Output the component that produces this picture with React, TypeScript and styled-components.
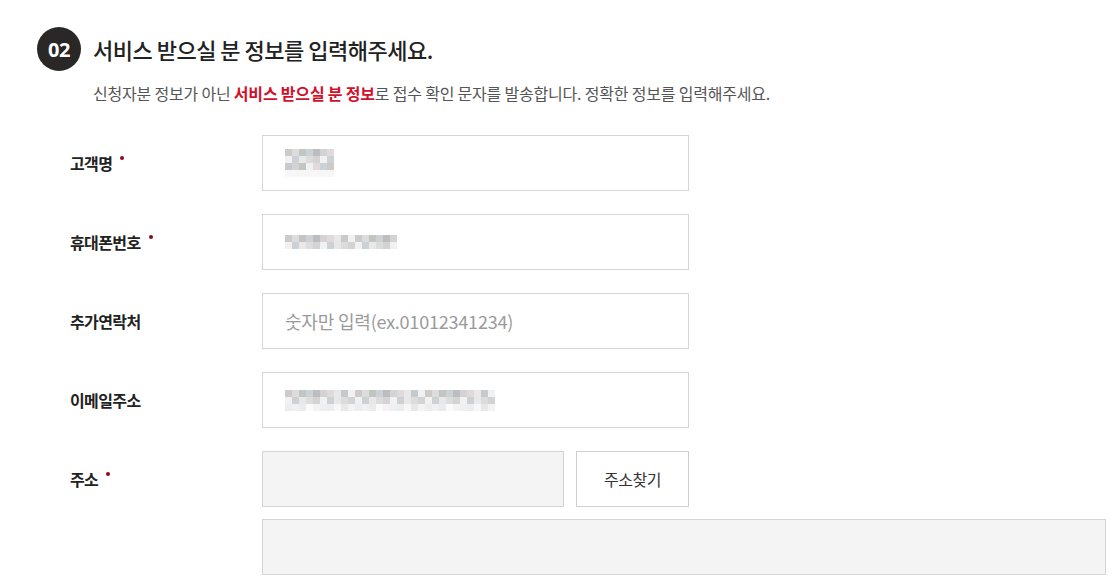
import React from "react";
import styled, { createGlobalStyle } from "styled-components";

const GlobalStyle = createGlobalStyle`
    body {
        margin: 0;
        background: #fff;
        font-family: "Noto Sans CJK KR", "Noto Sans", sans-serif;
        color: #222;
    }
`;

const Wrapper = styled.div`
    padding: 27px 0 0 37px;
`;

const Header = styled.header`
    display: flex;
    align-items: center;
    gap: 12px;
`;

const Badge = styled.span`
    width: 44px;
    height: 44px;
    border-radius: 50%;
    background: #2a2727;
    color: #fff;
    display: flex;
    align-items: center;
    justify-content: center;
    font-family: "Noto Sans", sans-serif;
    font-size: 20px;
    font-weight: 700;
    letter-spacing: -0.5px;
`;

const Title = styled.h2`
    margin: 0;
    font-size: 22px;
    font-weight: 500;
    letter-spacing: -0.5px;
    color: #222;
`;

const Desc = styled.p`
    margin: 11px 0 0 56px;
    font-size: 16px;
    color: #555;
    letter-spacing: -0.2px;
    line-height: 22px;

    strong {
        color: #d0112b;
        font-weight: 700;
    }
`;

const Form = styled.div`
    margin: 31px 0 0 33px;
    display: flex;
    flex-direction: column;
    gap: 23px;
`;

const Row = styled.div`
    display: grid;
    grid-template-columns: 192px auto;
    align-items: start;
`;

const Label = styled.label`
    height: 56px;
    display: flex;
    align-items: center;
    font-size: 16px;
    font-weight: 700;
    color: #222;
    letter-spacing: -0.6px;
`;

const Required = styled.i`
    width: 4px;
    height: 4px;
    border-radius: 50%;
    background: #8b0a1a;
    margin: -10px 0 0 8px;
`;

const Field = styled.div<{ $width?: number; $filled?: boolean }>`
    width: ${(p) => p.$width ?? 427}px;
    height: 56px;
    box-sizing: border-box;
    border: 1px solid #d5d5d5;
    background: ${(p) => (p.$filled ? "#f4f4f4" : "#fff")};
    display: flex;
    align-items: center;
    padding-left: 22px;
    font-size: 18px;
`;

const Placeholder = styled.span`
    color: #9a9a9a;
    letter-spacing: -0.2px;
`;

const AddressBlock = styled.div`
    display: flex;
    flex-direction: column;
    gap: 12px;
`;

const AddressLine = styled.div`
    display: flex;
    gap: 12px;
`;

const SearchButton = styled.button`
    width: 113px;
    height: 56px;
    box-sizing: border-box;
    border: 1px solid #cfcfcf;
    background: #fff;
    font-family: inherit;
    font-size: 16px;
    color: #333;
    letter-spacing: -0.5px;
`;

const palette = ["#d3d3d5", "#c6cacd", "#dcdcdc", "#bdbcbe", "#e8e8e8", "#cfcaca", "#cbd1d5", "#e0dada", "#f1f1f1", "#c2c5c2"];

function Mosaic({ cols, rows, seed }: { cols: number; rows: number; seed: number }) {
    const cell = 7;
    const rects = [];
    for (let r = 0; r < rows; r++) {
        for (let c = 0; c < cols; c++) {
            const v = (c * 7 + r * 13 + seed * 5 + c * r) % palette.length;
            const fade = r === rows - 1 && rows > 2 ? 0.35 : 1;
            rects.push(
                <rect key={`${r}-${c}`} x={c * cell} y={r * cell} width={cell} height={cell} fill={palette[v]} opacity={fade} />
            );
        }
    }
    return (
        <svg width={cols * cell} height={rows * cell}>
            {rects}
        </svg>
    );
}

function App() {
    return (
        <Wrapper>
            <GlobalStyle />
            <Header>
                <Badge>02</Badge>
                <Title>서비스 받으실 분 정보를 입력해주세요.</Title>
            </Header>
            <Desc>
                신청자분 정보가 아닌 <strong>서비스 받으실 분 정보</strong>로 접수 확인 문자를 발송합니다. 정확한 정보를 입력해주세요.
            </Desc>

            <Form>
                <Row>
                    <Label>
                        고객명<Required />
                    </Label>
                    <Field>
                        <Mosaic cols={7} rows={4} seed={1} />
                    </Field>
                </Row>
                <Row>
                    <Label>
                        휴대폰번호<Required />
                    </Label>
                    <Field>
                        <Mosaic cols={16} rows={2} seed={3} />
                    </Field>
                </Row>
                <Row>
                    <Label>추가연락처</Label>
                    <Field>
                        <Placeholder>숫자만 입력(ex.01012341234)</Placeholder>
                    </Field>
                </Row>
                <Row>
                    <Label>이메일주소</Label>
                    <Field>
                        <Mosaic cols={30} rows={3} seed={5} />
                    </Field>
                </Row>
                <Row>
                    <Label>
                        주소<Required />
                    </Label>
                    <AddressBlock>
                        <AddressLine>
                            <Field $width={302} $filled />
                            <SearchButton>주소찾기</SearchButton>
                        </AddressLine>
                        <Field $width={844} $filled />
                    </AddressBlock>
                </Row>
            </Form>
        </Wrapper>
    );
}

export default React.memo(App);
